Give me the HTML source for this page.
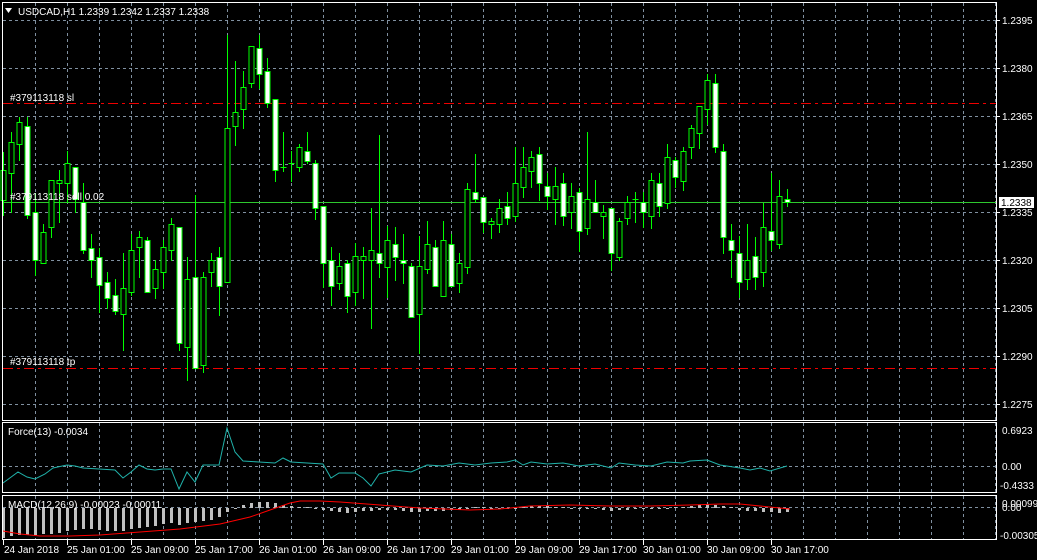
<!DOCTYPE html>
<html><head><meta charset="utf-8"><style>
html,body{margin:0;padding:0;background:#000;overflow:hidden;}
svg{display:block;font-family:"Liberation Sans",sans-serif;}
text{fill:#fff;font-size:10px;}
</style></head><body>
<svg id="s" width="1037" height="560" xmlns="http://www.w3.org/2000/svg">
<rect width="1037" height="560" fill="#000"/>
<g id="grid"></g>
<g id="lines">
<line x1="3" y1="103.5" x2="996" y2="103.5" stroke="#e00" stroke-dasharray="10,4,3,4"/>
<line x1="3" y1="368.5" x2="996" y2="368.5" stroke="#e00" stroke-dasharray="10,4,3,4"/>
<line x1="3" y1="202.5" x2="996" y2="202.5" stroke="#2ec82e"/>
</g>
<g id="candles"></g>
<g id="ind"></g>
<!-- frames -->
<rect x="2.5" y="2.5" width="994" height="418" fill="none" stroke="#fff"/>
<rect x="2.5" y="422.5" width="994" height="70" fill="none" stroke="#fff"/>
<rect x="2.5" y="495.5" width="994" height="44" fill="none" stroke="#fff"/>
<polygon points="5,8 12,8 8.5,13" fill="#fff"/>
<text x="18" y="15">USDCAD,H1  1.2339 1.2342 1.2337 1.2338</text>
<text x="10" y="101" font-size="9.5">#379113118 sl</text>
<text x="10" y="200" font-size="9.5">#379113118 sell 0.02</text>
<text x="10" y="365" font-size="9.5">#379113118 tp</text>
<text x="8" y="435">Force(13) -0.0034</text>
<text x="8" y="508">MACD(12,26,9) -0.00023 -0.00011</text>
<g id="axis"></g>
<rect x="999" y="197" width="35" height="11" fill="#fff"/>
<text x="1001" y="206" style="fill:#000">1.2338</text>
<g>
<text x="1002" y="24">1.2395</text><text x="1002" y="72">1.2380</text><text x="1002" y="120">1.2365</text>
<text x="1002" y="168">1.2350</text><text x="1002" y="216">1.2335</text><text x="1002" y="264">1.2320</text>
<text x="1002" y="312">1.2305</text><text x="1002" y="360">1.2290</text><text x="1002" y="408">1.2275</text>
<text x="1002" y="434">0.6923</text><text x="1002" y="470">0.00</text><text x="1000" y="489">-0.4333</text>
<text x="1002" y="507">0.00099</text><text x="1002" y="511">0.00</text><text x="1000" y="539">-0.00305</text>
</g>
<g>
<text x="4" y="553">24 Jan 2018</text><text x="67" y="553">25 Jan 01:00</text><text x="131" y="553">25 Jan 09:00</text>
<text x="195" y="553">25 Jan 17:00</text><text x="259" y="553">26 Jan 01:00</text><text x="323" y="553">26 Jan 09:00</text>
<text x="387" y="553">26 Jan 17:00</text><text x="451" y="553">29 Jan 01:00</text><text x="515" y="553">29 Jan 09:00</text>
<text x="579" y="553">29 Jan 17:00</text><text x="643" y="553">30 Jan 01:00</text><text x="707" y="553">30 Jan 09:00</text>
<text x="771" y="553">30 Jan 17:00</text>
</g>
</svg>
<script>
var NS="http://www.w3.org/2000/svg";
function el(p,n,a){var e=document.createElementNS(NS,n);for(var k in a)e.setAttribute(k,a[k]);document.getElementById(p).appendChild(e);return e;}
var gc="#8090a0";
for(var x=35;x<996;x+=32){
 el("grid","line",{x1:x+.5,y1:3,x2:x+.5,y2:420,stroke:gc,"stroke-dasharray":"3,3"});
 el("grid","line",{x1:x+.5,y1:423,x2:x+.5,y2:492,stroke:gc,"stroke-dasharray":"3,3"});
 el("grid","line",{x1:x+.5,y1:496,x2:x+.5,y2:539,stroke:gc,"stroke-dasharray":"3,3"});
}
for(var y=20;y<420;y+=48){el("grid","line",{x1:3,y1:y+.5,x2:996,y2:y+.5,stroke:gc,"stroke-dasharray":"3,3"});
 el("axis","line",{x1:996,y1:y+.5,x2:1000,y2:y+.5,stroke:"#fff"});}
el("grid","line",{x1:3,y1:466.5,x2:996,y2:466.5,stroke:gc,"stroke-dasharray":"3,3"});
el("grid","line",{x1:3,y1:507.5,x2:996,y2:507.5,stroke:gc,"stroke-dasharray":"3,3"});
for(var x=3;x<800;x+=64){el("axis","line",{x1:x+.5,y1:540,x2:x+.5,y2:545,stroke:"#fff"});}
var C=[[152,170,200,215,0],[132,142,173,212,0],[117,122,144,160,0],[117,126,215,218,1],[193,212,260,275,1],[224,232,263,263,0],[180,180,227,237,0],[170,180,183,222,0],[151,163,183,202,0],[167,167,199,212,1],[183,202,250,253,1],[234,248,260,277,1],[248,257,285,312,1],[272,282,298,308,1],[279,295,311,314,1],[253,288,314,350,0],[234,250,292,295,0],[231,237,247,277,0],[237,240,292,292,1],[260,269,288,298,0],[240,247,272,288,0],[218,224,250,260,0],[227,227,343,350,1],[257,279,347,380,0],[195,277,368,368,1],[272,277,365,372,0],[253,260,272,286,0],[247,257,286,315,1],[35,128,282,282,0],[61,112,126,145,0],[71,87,109,128,0],[46,46,83,87,0],[35,48,74,88,1],[58,71,103,107,1],[99,99,170,181,1],[132,167,168,171,0],[151,163,164,181,0],[144,147,167,171,0],[132,151,161,163,1],[160,163,208,219,1],[206,206,263,287,1],[247,260,286,305,1],[253,266,283,289,0],[260,263,296,312,1],[243,256,292,305,0],[247,256,260,298,0],[208,250,260,328,0],[135,253,263,277,1],[226,240,267,297,0],[227,244,257,280,1],[234,260,263,283,1],[263,266,317,317,1],[236,266,314,353,0],[221,244,269,273,0],[240,247,286,286,1],[221,240,296,296,0],[234,244,286,286,1],[253,263,283,292,0],[183,189,267,273,0],[154,192,199,202,1],[197,197,222,232,1],[218,221,224,238,0],[199,208,224,232,0],[192,206,218,224,1],[147,183,216,221,0],[147,167,187,197,0],[151,157,171,187,0],[147,154,183,200,1],[173,186,196,209,1],[167,186,199,224,0],[173,183,216,225,1],[183,196,212,228,0],[188,192,231,251,1],[132,199,228,234,0],[180,202,212,212,1],[205,212,216,238,0],[208,208,253,270,1],[218,221,257,260,0],[196,202,218,224,0],[192,199,200,222,0],[192,202,212,227,1],[173,180,216,228,0],[173,183,206,216,1],[144,157,203,208,0],[157,160,177,187,1],[147,151,181,190,0],[125,128,147,158,0],[106,106,133,148,0],[74,80,109,124,0],[74,83,147,152,1],[144,151,237,253,1],[224,240,250,277,1],[236,253,282,297,1],[224,260,279,289,0],[237,256,277,289,1],[203,227,272,286,0],[173,231,240,250,1],[180,196,244,248,0],[189,199,202,206,1]];
C.forEach(function(c,i){var cx=Math.floor(3.5+8*i)+.5;
 el("candles","line",{x1:cx,y1:c[0],x2:cx,y2:c[3]+1,stroke:"#00ff00"});
 var h=Math.max(c[2]-c[1],1);
 if(c[2]-c[1]<2&&c[4]==0){el("candles","line",{x1:cx-3,y1:c[1]+.5,x2:cx+3,y2:c[1]+.5,stroke:"#00ff00"});}
 else el("candles","rect",{x:cx-2.5,y:c[1]+.5,width:5,height:h,fill:c[4]?"#fff":"#000",stroke:"#00ff00"});
});
// force
var F=[[3,483],[18,472],[27,477],[35,479],[45,474],[53,468],[67,465],[75,466],[83,468],[99,469],[115,470],[123,478],[131,472],[139,465],[147,469],[155,470],[163,469],[171,469],[179,489],[187,472],[195,482],[203,465],[219,465],[227,428],[235,452],[243,461],[259,462],[275,463],[283,458],[291,462],[307,463],[323,464],[331,478],[339,473],[355,473],[363,478],[371,486],[379,474],[395,470],[411,472],[427,465],[443,466],[459,463],[475,465],[491,463],[507,462],[515,460],[523,465],[531,462],[547,464],[563,463],[579,466],[595,464],[611,468],[619,463],[635,465],[651,466],[667,462],[683,463],[690,461],[707,460],[720,465],[740,468],[750,470],[760,468],[770,471],[780,468],[787,466]];
el("ind","polyline",{points:F.map(function(p){return p.join(",")}).join(" "),fill:"none",stroke:"#20b2aa"});
// macd
var M=[30,28,27,27,27,26,26,25,23,22,21,21,22,23,23,23,21,20,19,18,16,15,17,15,14,13,12,9,4,0,-3,-5,-6,-6,-5,-3,-2,-1,-1,1,2,3,4,5,4,3,3,2,2,2,3,4,4,3,3,3,2,2,1,-1,-1,0,0,0,0,-1,-2,-2,-2,-1,-1,0,0,1,1,2,3,2,2,1,1,1,0,0,-1,-1,-2,-3,-4,-3,-2,-1,2,3,3,4,4,5,4];
M.forEach(function(v,i){var cx=Math.floor(3.5+8*i)-1;
 var y1=v>=0?508:508+v, h=Math.max(Math.abs(v),1);
 el("ind","rect",{x:cx,y:y1,width:3,height:h,fill:"#c0c0c0"});});
var S=[[3,531],[20,534],[40,536],[70,536],[100,535],[140,532],[180,529],[220,524],[250,517],[270,510],[290,503],[300,501],[320,501],[340,502],[380,505],[420,508],[470,510],[500,509],[530,506],[570,505],[610,506],[650,506],[690,505],[720,504],[740,504],[760,506],[780,508],[790,509]];
el("ind","polyline",{points:S.map(function(p){return p.join(",")}).join(" "),fill:"none",stroke:"#ff0000"});
</script>
</body></html>
